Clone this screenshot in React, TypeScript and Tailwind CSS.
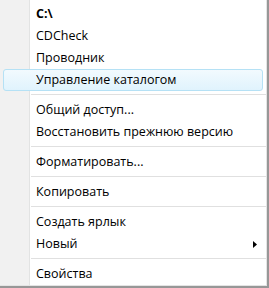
import { ReactNode } from "react";

// Menu rows, top to bottom
type Row =
  | { kind: "item"; label: string; bold?: boolean; active?: boolean; submenu?: boolean }
  | { kind: "sep" };

const rows: Row[] = [
  { kind: "item", label: "C:\\", bold: true },
  { kind: "item", label: "CDCheck" },
  { kind: "item", label: "Проводник" },
  { kind: "item", label: "Управление каталогом", active: true },
  { kind: "sep" },
  { kind: "item", label: "Общий доступ..." },
  { kind: "item", label: "Восстановить прежнюю версию" },
  { kind: "sep" },
  { kind: "item", label: "Форматировать..." },
  { kind: "sep" },
  { kind: "item", label: "Копировать" },
  { kind: "sep" },
  { kind: "item", label: "Создать ярлык" },
  { kind: "item", label: "Новый", submenu: true },
  { kind: "sep" },
  { kind: "item", label: "Свойства" },
];

function SubmenuArrow() {
  return (
    <svg width="4" height="7" viewBox="0 0 4 7" className="shrink-0">
      <path d="M0 0 L4 3.5 L0 7 Z" fill="#000" />
    </svg>
  );
}

function MenuItem({
  label,
  bold,
  active,
  submenu,
}: {
  label: string;
  bold?: boolean;
  active?: boolean;
  submenu?: boolean;
}) {
  let content: ReactNode = (
    <>
      <span className={`flex-1 ${bold ? "font-bold" : ""}`}>{label}</span>
      {submenu && <SubmenuArrow />}
    </>
  );

  if (active) {
    return (
      <div className="h-[22px] px-[3px] flex">
        <div className="flex-1 flex items-center pl-[32px] pr-[8px] rounded-[3px] border border-[#b5e1f5] bg-[linear-gradient(to_bottom,#f2fafe,#e0f3fd)]">
          {content}
        </div>
      </div>
    );
  }

  return (
    <div className="h-[22px] flex items-center pl-[36px] pr-[9px]">{content}</div>
  );
}

function Separator() {
  return (
    <div className="h-[8px] flex flex-col justify-center pl-[31px]">
      <div className="h-px bg-[#e0e0e0]" />
      <div className="h-px bg-white" />
    </div>
  );
}

export default function App() {
  return (
    <div className="w-[269px] h-[288px] border-r-2 border-b-2 border-[#979797] bg-[#f5f5f5]">
      <div className="h-full pt-[3px] font-['Open_Sans',sans-serif] text-[12.5px] leading-none text-black border-r border-b border-[#e4e4e4] bg-[linear-gradient(to_right,#f1f1f1_29px,#e2e3e3_29px,#e2e3e3_30px,#ffffff_30px)]">
        {rows.map((row, i) =>
          row.kind === "sep" ? (
            <Separator key={i} />
          ) : (
            <MenuItem
              key={i}
              label={row.label}
              bold={row.bold}
              active={row.active}
              submenu={row.submenu}
            />
          )
        )}
      </div>
    </div>
  );
}
